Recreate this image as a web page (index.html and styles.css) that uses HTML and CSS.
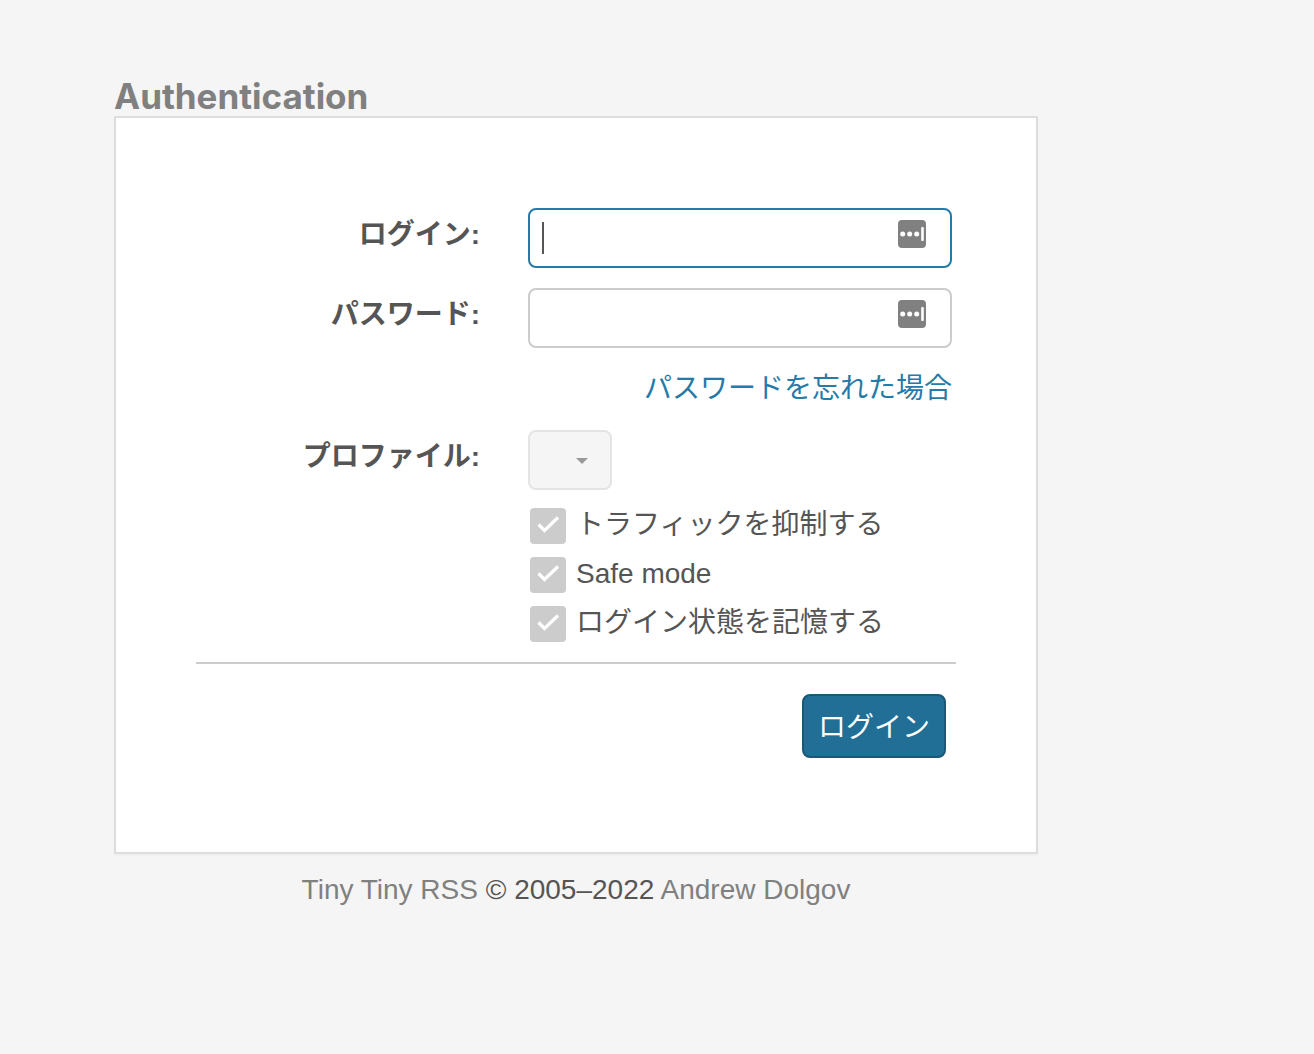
FILE: index.html
```html
<!DOCTYPE html>
<html lang="ja">
<head>
<meta charset="utf-8">
<meta name="viewport" content="width=device-width, initial-scale=1">
<title>Tiny Tiny RSS : Login</title>
<link rel="stylesheet" href="styles.css">
</head>
<body>
<svg class="defs" aria-hidden="true">
  <symbol id="manager" viewBox="0 0 28 28">
    <rect width="28" height="28" rx="4" fill="#808080"/>
    <circle cx="4.700" cy="14" r="2.500" fill="#fff"/>
    <circle cx="11.700" cy="14" r="2.500" fill="#fff"/>
    <circle cx="18.700" cy="14" r="2.500" fill="#fff"/>
    <rect x="23.200" y="7" width="2.600" height="14" rx="1" fill="#fff"/>
  </symbol>
</svg>
<main class="page">
  <h1 class="title">Authentication</h1>
  <form class="card">
    <div class="fields">
      <label class="label" for="login">ログイン:</label>
      <div class="control">
        <input class="input input-active" id="login" type="text" autocomplete="username">
        <svg class="manager" aria-hidden="true"><use href="#manager"/></svg>
      </div>
      <label class="label" for="password">パスワード:</label>
      <div class="control">
        <input class="input" id="password" type="password" autocomplete="current-password">
        <svg class="manager" aria-hidden="true"><use href="#manager"/></svg>
      </div>
      <a class="forgot" href="#forgot">パスワードを忘れた場合</a>
      <label class="label" for="profile">プロファイル:</label>
      <select class="select" id="profile" disabled><option></option></select>
      <div class="checks">
        <label class="check"><input class="box" type="checkbox">トラフィックを抑制する</label>
        <label class="check"><input class="box" type="checkbox">Safe mode</label>
        <label class="check"><input class="box" type="checkbox">ログイン状態を記憶する</label>
      </div>
    </div>
    <hr class="rule">
    <div class="actions"><button class="submit" type="submit">ログイン</button></div>
  </form>
  <footer class="footer"><a href="#project">Tiny Tiny RSS</a> © 2005–2022 <a href="#author">Andrew Dolgov</a></footer>
</main>
</body>
</html>
```

FILE: styles.css
```css
* {
  box-sizing: border-box;
}

body {
  margin: 0;
  background: #f5f5f5;
  color: #555;
  font-family: "Liberation Sans", "Noto Sans CJK JP", sans-serif;
  font-size: 28px;
  line-height: 40px;
}

.defs {
  display: none;
}

.page {
  max-width: 1038px;
  padding: 76px 0 40px 114px;
}

.title {
  margin: 0;
  color: #808080;
  font-family: Inter, sans-serif;
  font-size: 35px;
  font-weight: 700;
  line-height: 40px;
}

.card {
  padding: 90px 80px 94px;
  background: #fff;
  border: 2px solid #ddd;
  box-shadow: 0 2px 2px rgba(0, 0, 0, 0.03);
}

.fields {
  display: grid;
  grid-template-columns: minmax(0, 1fr) minmax(0, 424px);
  column-gap: 48px;
  row-gap: 18px;
  align-items: start;
  padding-right: 4px;
}

.label {
  font-weight: 700;
  line-height: 54px;
  text-align: right;
}

.control {
  position: relative;
  padding-bottom: 2px;
}

.input {
  display: block;
  width: 100%;
  height: 60px;
  padding: 0 56px 0 12px;
  background: #fff;
  border: 2px solid #ccc;
  border-radius: 8px;
  color: inherit;
  font: inherit;
  outline: none;
}

.input-active {
  background: linear-gradient(#555, #555) 12px 12px / 2px 32px no-repeat #fff;
  border-color: #257aa7;
}

.manager {
  position: absolute;
  top: 12px;
  right: 26px;
  width: 28px;
  height: 28px;
}

.forgot {
  grid-column: 1 / -1;
  justify-self: end;
  padding-bottom: 2px;
  color: #257aa7;
  line-height: 42px;
  text-decoration: none;
}

.select {
  appearance: none;
  width: 84px;
  height: 60px;
  background: #f5f5f5 url("data:image/svg+xml,%3Csvg xmlns='http://www.w3.org/2000/svg' width='12' height='6'%3E%3Cpath d='M0 0h12L6 6z' fill='%23999'/%3E%3C/svg%3E") 46px 26px no-repeat;
  border: 2px solid #e4e4e4;
  border-radius: 8px;
  font: inherit;
  opacity: 1;
}

.checks {
  display: grid;
  grid-column: 2;
  row-gap: 13px;
  padding-left: 2px;
}

.check {
  display: flex;
  gap: 10px;
  line-height: 34px;
  white-space: nowrap;
}

.box {
  appearance: none;
  flex: none;
  width: 36px;
  height: 36px;
  margin: 0;
  background: #ccc url("data:image/svg+xml,%3Csvg xmlns='http://www.w3.org/2000/svg' viewBox='0 0 36 36'%3E%3Cpath d='M8.5 16.500l6 6L28 9.500' fill='none' stroke='%23fff' stroke-width='3.200'/%3E%3C/svg%3E");
  border-radius: 4px;
}

.rule {
  margin: 20px 0 30px;
  border: 0;
  border-top: 2px solid #ccc;
}

.actions {
  display: flex;
  justify-content: flex-end;
  padding-right: 10px;
}

.submit {
  height: 64px;
  padding: 4px 14px 0;
  background: #216e96;
  border: 2px solid #1a5878;
  border-radius: 8px;
  color: #fff;
  font: inherit;
}

.footer {
  padding-top: 16px;
  text-align: center;
}

.footer a {
  color: #808080;
  text-decoration: none;
}
```
